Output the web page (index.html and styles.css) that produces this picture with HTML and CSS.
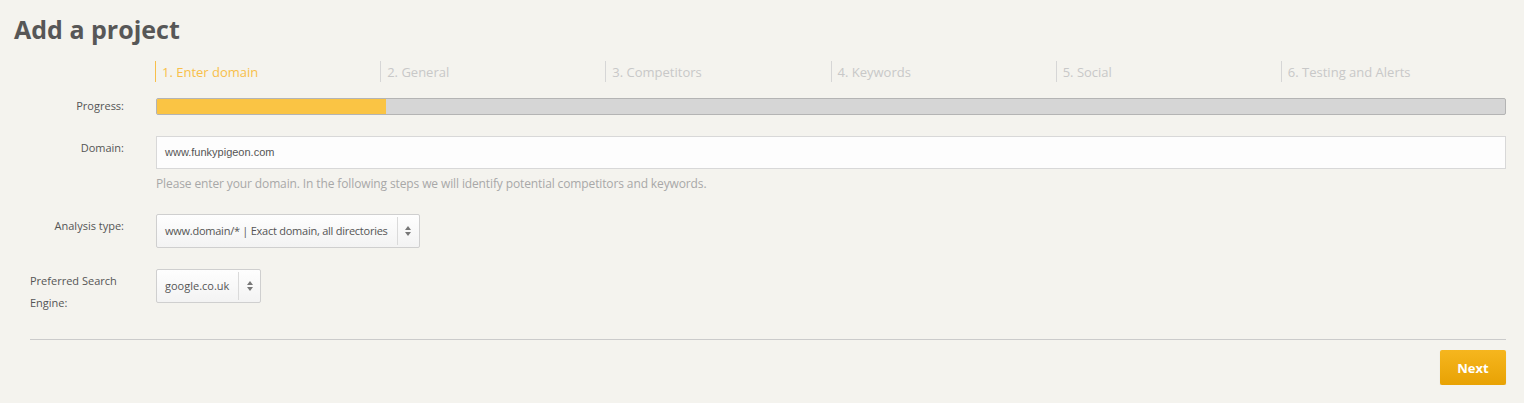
FILE: index.html
```html
<!DOCTYPE html>
<html lang="en">
    <head>
        <meta charset="UTF-8" />
        <title>Add a project</title>
        <link rel="stylesheet" href="styles.css">
    </head>
    <body>
        <h1 class="tit">Add a project</h1>

        <div class="wizard">
            <!-- steps -->
            <div class="row">
                <div class="lbl"></div>
                <ul class="steps">
                    <li class="on">1. Enter domain</li>
                    <li>2. General</li>
                    <li>3. Competitors</li>
                    <li>4. Keywords</li>
                    <li>5. Social</li>
                    <li>6. Testing and Alerts</li>
                </ul>
            </div>

            <!-- progress -->
            <div class="row row-progress">
                <div class="lbl">Progress:</div>
                <div class="bar"><div class="bar-fill"></div></div>
            </div>

            <!-- domain -->
            <div class="row row-domain">
                <div class="lbl">Domain:</div>
                <div>
                    <div class="inp">www.funkypigeon.com</div>
                    <p class="help">Please enter your domain. In the following steps we will identify potential competitors and keywords.</p>
                </div>
            </div>

            <!-- analysis type -->
            <div class="row row-type">
                <div class="lbl">Analysis type:</div>
                <div class="sel">
                    <span class="sel-txt">www.domain/* | Exact domain, all directories</span>
                    <span class="sel-arr"><i class="up"></i><i class="dn"></i></span>
                </div>
            </div>

            <!-- search engine -->
            <div class="row row-engine">
                <div class="lbl lbl-left">Preferred Search Engine:</div>
                <div class="sel sel-sm">
                    <span class="sel-txt">google.co.uk</span>
                    <span class="sel-arr"><i class="up"></i><i class="dn"></i></span>
                </div>
            </div>

            <hr class="line" />

            <div class="btns">
                <button class="btn-next">Next</button>
            </div>
        </div>
    </body>
</html>
```
FILE: styles.css
```css
body {
    margin: 0;
    background: #f4f3ee;
    font-family: "Open Sans", "DejaVu Sans", sans-serif;
    color: #555;
}
.tit {
    margin: 0;
    padding: 13px 0 0 14px;
    font-size: 25px;
    line-height: 32px;
    font-weight: 700;
    color: #575757;
}
/* wizard box */
.wizard {
    padding: 0 18px 0 30px;
}
.row {
    display: grid;
    grid-template-columns: 126px 1fr;
    align-items: start;
}
.lbl {
    text-align: right;
    padding-right: 32px;
    font-size: 11px;
    color: #555;
}
.lbl-left {
    text-align: left;
    padding-right: 20px;
    line-height: 22px;
}
/* steps */
.steps {
    display: flex;
    list-style: none;
    margin: 16px 0 0 -1px;
    padding: 0;
}
.steps li {
    flex: 1;
    border-left: 1px solid #d6d6d6;
    padding-left: 6px;
    height: 21px;
    line-height: 23px;
    font-size: 13px;
    color: #c8c8c8;
}
.steps li.on {
    color: #f8bf4a;
    border-left-color: #f8bf4a;
}
/* progress */
.row-progress {
    margin-top: 16px;
}
.row-progress .lbl {
    line-height: 15px;
}
.bar {
    height: 15px;
    background: #d6d6d6;
    border: 1px solid #b4b4b4;
    border-radius: 2px;
    overflow: hidden;
}
.bar-fill {
    width: 17%;
    height: 100%;
    background: #fac444;
}
/* domain input */
.row-domain {
    margin-top: 21px;
}
.row-domain .lbl {
    line-height: 24px;
}
.inp {
    height: 31px;
    line-height: 31px;
    background: #fdfdfd;
    border: 1px solid #d8d8d8;
    padding-left: 8px;
    font-family: "Liberation Sans", Arial, sans-serif;
    font-size: 11px;
    color: #555;
}
.help {
    margin: 6px 0 0;
    font-size: 12px;
    letter-spacing: -0.12px;
    color: #a8a8a8;
}
/* selects */
.row-type {
    margin-top: 22px;
}
.row-type .lbl {
    line-height: 24px;
}
.sel {
    display: inline-flex;
    justify-self: start;
    align-items: center;
    height: 32px;
    border: 1px solid #cfcfcf;
    border-radius: 2px;
    background: linear-gradient(to bottom, #fefefe, #f3f3f3);
    font-size: 11px;
    letter-spacing: -0.25px;
    color: #555;
}
.sel-sm {
    letter-spacing: 0;
}
.sel-txt {
    padding: 0 9px 0 8px;
    line-height: 32px;
}
.sel-arr {
    display: flex;
    flex-direction: column;
    align-items: center;
    gap: 2px;
    width: 21px;
    height: 28px;
    justify-content: center;
    border-left: 1px solid #dadada;
}
.sel-arr i {
    width: 0;
    height: 0;
    border-left: 3px solid transparent;
    border-right: 3px solid transparent;
}
.sel-arr .up {
    border-bottom: 4px solid #777;
}
.sel-arr .dn {
    border-top: 4px solid #777;
}
.row-engine {
    margin-top: 21px;
}
.row-engine .lbl {
    margin-top: 1px;
}
/* footer */
.line {
    margin: 25px 0 0;
    border: 0;
    border-top: 1px solid #cbcbcb;
}
.btns {
    display: flex;
    justify-content: flex-end;
    margin-top: 10px;
}
.btn-next {
    width: 66px;
    height: 35px;
    border: 0;
    border-radius: 2px;
    background: linear-gradient(to bottom, #f6b61e, #e8a204);
    box-shadow: 0 1px 1px rgba(0, 0, 0, 0.15);
    color: #fff;
    font-family: "Open Sans", sans-serif;
    font-weight: 700;
    font-size: 13px;
}
```
